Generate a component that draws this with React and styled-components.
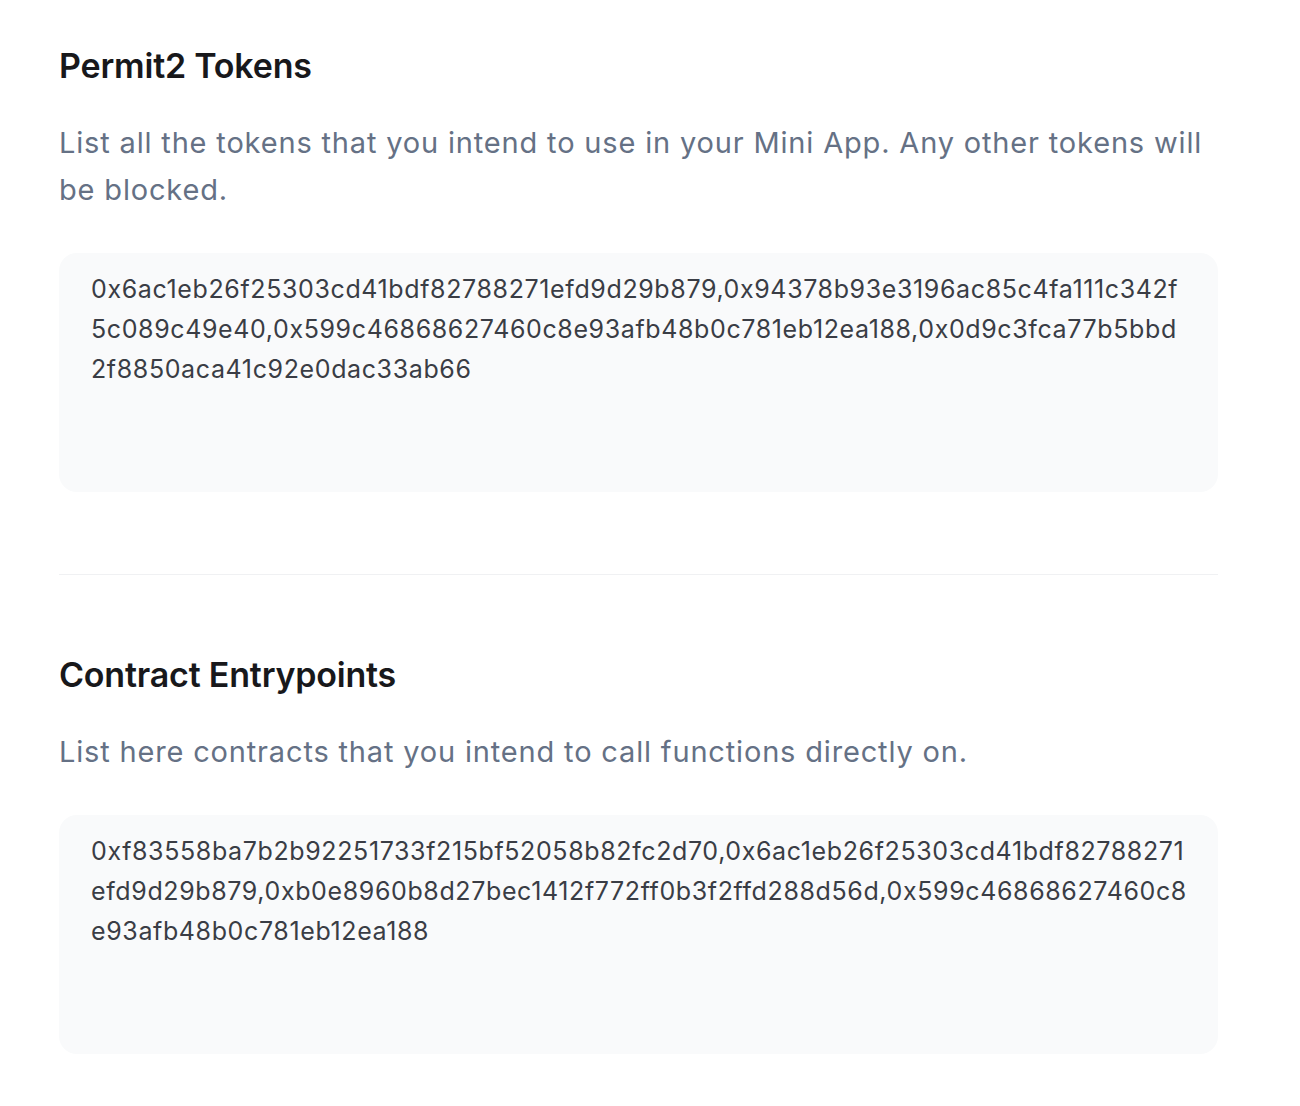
import React from 'react';
import styled, { createGlobalStyle } from 'styled-components';

const GlobalStyle = createGlobalStyle`
    body {
        margin: 0;
        background: #ffffff;
        font-family: Inter, "Noto Sans", sans-serif;
    }
`;

const Page = styled.div`
    width: 1159px;
    padding: 46px 0 52px 59px;
    display: flex;
    flex-direction: column;
`;

const Section = styled.section`
    display: flex;
    flex-direction: column;
    padding-top: ${props => props.first ? '0' : '80px'};
    padding-bottom: ${props => props.last ? '0' : '82px'};
    border-bottom: ${props => props.last ? 'none' : '1px solid #f0f1f3'};
`;

const Title = styled.h2`
    margin: 0;
    font-size: 34px;
    line-height: 40px;
    font-weight: 600;
    letter-spacing: -0.2px;
    color: #18181b;
`;

const Description = styled.p`
    margin: 33px 0 0;
    font-size: 29px;
    line-height: 47px;
    font-weight: 400;
    letter-spacing: 0.83px;
    color: #657185;
`;

const AddressBox = styled.textarea`
    margin-top: 40px;
    box-sizing: border-box;
    width: 100%;
    height: 239px;
    padding: 16px 29px 16px 32px;
    border: none;
    outline: none;
    resize: none;
    border-radius: 18px;
    background: #f9fafb;
    font-family: Inter, "Noto Sans", sans-serif;
    font-size: 25px;
    line-height: 40px;
    letter-spacing: 0.62px;
    color: #3a3d45;
    overflow-wrap: anywhere;
    word-break: break-all;
`;

const sections = [
    {
        title: 'Permit2 Tokens',
        text: 'List all the tokens that you intend to use in your Mini App. Any other tokens will be blocked.',
        value: '0x6ac1eb26f25303cd41bdf82788271efd9d29b879,0x94378b93e3196ac85c4fa111c342f5c089c49e40,0x599c46868627460c8e93afb48b0c781eb12ea188,0x0d9c3fca77b5bbd2f8850aca41c92e0dac33ab66'
    },
    {
        title: 'Contract Entrypoints',
        text: 'List here contracts that you intend to call functions directly on.',
        value: '0xf83558ba7b2b92251733f215bf52058b82fc2d70,0x6ac1eb26f25303cd41bdf82788271efd9d29b879,0xb0e8960b8d27bec1412f772ff0b3f2ffd288d56d,0x599c46868627460c8e93afb48b0c781eb12ea188'
    }
];

const App = () => (
    <>
        <GlobalStyle />
        <Page>
            {sections.map((s, i) => (
                <Section key={s.title} first={i === 0} last={i === sections.length - 1}>
                    <Title>{s.title}</Title>
                    <Description>{s.text}</Description>
                    <AddressBox readOnly value={s.value} />
                </Section>
            ))}
        </Page>
    </>
);

export default App;
